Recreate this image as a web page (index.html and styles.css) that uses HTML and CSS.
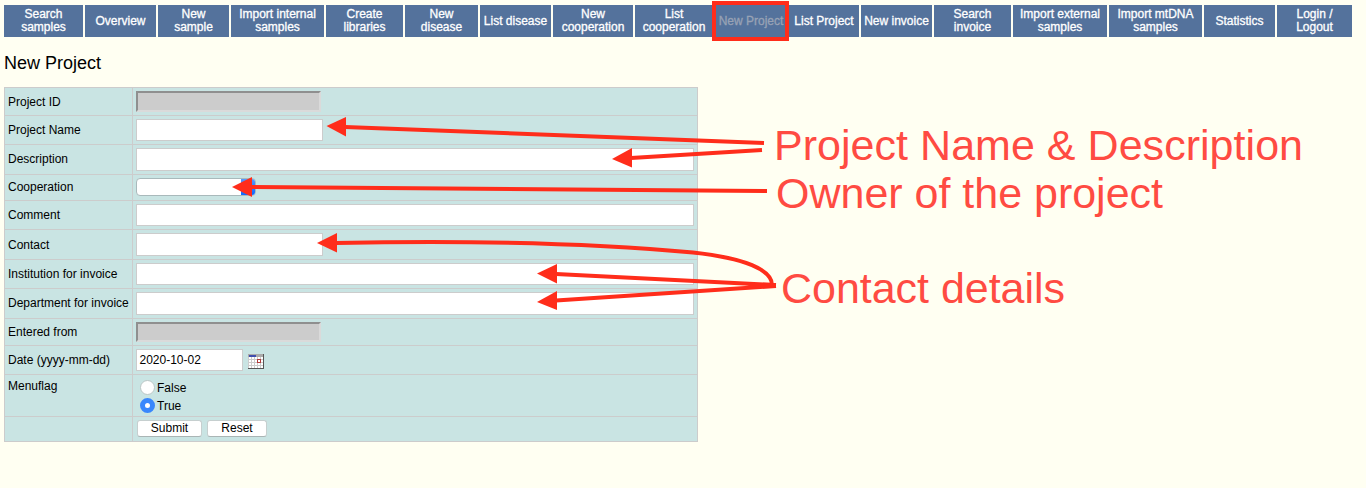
FILE: index.html
```html
<!DOCTYPE html>
<html lang="en">
<head>
<meta charset="utf-8">
<title>New Project</title>
<link rel="stylesheet" href="styles.css">
</head>
<body>
<nav class="menu">
<a>Search<br>samples</a><a>Overview</a><a>New<br>sample</a><a>Import internal<br>samples</a><a>Create<br>libraries</a><a>New<br>disease</a><a>List disease</a><a>New<br>cooperation</a><a>List<br>cooperation</a><a class="current">New Project</a><a>List Project</a><a>New invoice</a><a>Search<br>invoice</a><a>Import external<br>samples</a><a>Import mtDNA<br>samples</a><a>Statistics</a><a>Login /<br>Logout</a>
</nav>
<h1>New Project</h1>
<form class="form">
<label>Project ID</label><div><span class="locked"></span></div>
<label>Project Name</label><div><span class="field"></span></div>
<label class="raised">Description</label><div><span class="field wide tall"></span></div>
<label class="raised">Cooperation</label><div><span class="select"><i></i></span></div>
<label>Comment</label><div><span class="field wide"></span></div>
<label>Contact</label><div><span class="field tall"></span></div>
<label>Institution for invoice</label><div><span class="field wide"></span></div>
<label class="raised">Department for invoice</label><div><span class="field wide tall"></span></div>
<label>Entered from</label><div><span class="locked short"></span></div>
<label>Date (yyyy-mm-dd)</label><div class="date"><span class="field">2020-10-02</span>
<svg class="calendar" width="16" height="15" viewBox="0 0 16 15" shape-rendering="crispEdges"><path fill="#ccc" d="M0 0h16v15H0z"/><path fill="#aaa" d="M0 0h16v3H0z"/><path fill="#3f4fae" d="M1 1h7v2H1z"/><path stroke="#fff" stroke-width="2" stroke-dasharray="2 1" fill="none" d="M1 4h14M1 7h14M1 10h14M1 13h14"/><path fill="#555" d="M15 0h1v15H0v-1h15z"/><path stroke="#b33a3a" fill="#fff" d="M9.500 5.500h3v3h-3z"/></svg></div>
<label class="top">Menuflag</label><div class="options"><span><i class="radio"></i><b>False</b></span><span><i class="radio on"></i><b>True</b></span></div>
<label></label><div class="actions"><button type="button" class="submit">Submit</button><button type="button">Reset</button></div>
</form>
<svg class="notes" width="1366" height="488" viewBox="0 0 1366 488">
<rect x="714" y="3" width="73" height="36"/>
<path d="M345 127L764 143M631 158L762 150M251 187L767 191M336 243C480 240 600 244 693 252.500C745 258 772 270 772 285M556 274L776 285M556 300.500L776 286"/>
<g class="heads"><path d="M326.500 126L346 117V136.500z"/><path d="M612 159L632 148V167.500z"/><path d="M232 187L252 177V197z"/><path d="M317 243L337 233V252.500z"/><path d="M537 273.500L557 264V283.500z"/><path d="M537 302L557 291V310z"/></g>
<text x="774" y="160" textLength="529">Project Name &amp; Description</text>
<text x="776" y="208" textLength="387">Owner of the project</text>
<text x="781" y="303" textLength="284">Contact details</text>
</svg>
</body>
</html>
```
FILE: styles.css
```css
* { box-sizing: border-box; }
body { margin: 0; width: 1366px; height: 488px; overflow: hidden; background: #fffff2; color: #000; font: 12px/14px "Liberation Sans", Arial, sans-serif; }
.menu { display: grid; grid-template-columns: 79px 71px 71px 93px 77px 73px 71px 80px 78px 72px 70px 71px 77px 94px 93px 71px 75px; gap: 2px; height: 32px; margin: 5px 0 0 4px; }
.menu a { display: flex; align-items: center; justify-content: center; background: #54729c; color: #fff; text-align: center; line-height: 13px; white-space: nowrap; -webkit-text-stroke: 0.3px currentColor; }
.menu .current { color: #98a2b5; }
h1 { margin: 16px 0 0 4px; height: 34px; font-size: 18px; line-height: 20px; font-weight: 400; }
.form { display: grid; width: 694px; height: 355px; grid-template-columns: 128px 565px; grid-template-rows: 28px 29px 30px 26px 29px 30px 29px 30px 27px 29px 42px 25px; margin-left: 4px; background: #c9e4e3; border-right: 1px solid #ccc; border-bottom: 1px solid #ccc; }
.form > * { border-top: 1px solid #ccc; border-left: 1px solid #ccc; padding: 3px; }
.form label { display: flex; align-items: center; white-space: nowrap; }
.form label.raised { padding-bottom: 5px; }
.form label.top { align-items: flex-start; padding-top: 4px; }
.field { display: block; width: 187px; height: 22px; border: 1px solid #ccc; background: #fff; }
.wide { width: 558px; }
.tall { height: 23px; }
.locked { display: block; width: 185px; height: 21px; background: #ccc; border: 2px solid; border-color: #8f8f8f #dadada #dadada #8f8f8f; }
.short { height: 20px; }
.select { display: flex; justify-content: flex-end; width: 120px; height: 18px; border: 1px solid #a9b9bb; border-radius: 4px; background: #fff; overflow: hidden; }
.select i { width: 15px; margin: -1px; background: linear-gradient(#5b9cff, #0865ff); }
.date { display: flex; gap: 5px; }
.date .field { width: 107px; padding: 3px 2.5px; }
.calendar { margin-top: 5px; }
.form .options { padding: 3px 3px 0 7px; }
.options span { display: flex; height: 18px; align-items: center; gap: 2px; }
.options b { font-weight: 400; padding-top: 2px; }
.radio { width: 15px; height: 15px; border-radius: 50%; background: #fff; border: 1px solid #bbc6c6; }
.radio.on { border: 5px solid #3987fc; }
.form .actions { display: flex; gap: 5px; padding-left: 4px; }
button { width: 60px; height: 17px; padding: 0 0 1px; border: 1px solid #c6cfcf; border-bottom-color: #aab5b5; border-radius: 3px; background: #fff; color: #000; font: inherit; line-height: 14px; }
.submit { width: 65px; }
.notes { position: absolute; left: 0; top: 0; fill: none; stroke: #ff2d1b; stroke-width: 4; }
.heads { fill: #ff2d1b; stroke: none; }
.notes text { fill: #ff4b42; stroke: none; font-size: 43px; }
```
